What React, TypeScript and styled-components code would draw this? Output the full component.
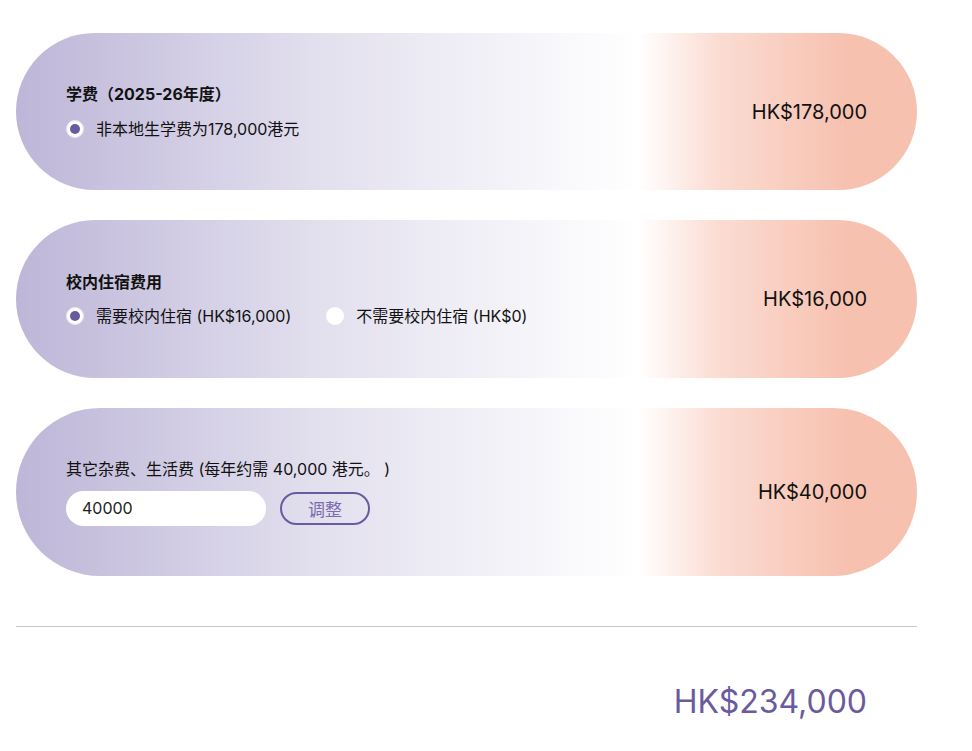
import React, { useState } from "react";
import styled, { createGlobalStyle } from "styled-components";

const Global = createGlobalStyle`
  html, body { margin: 0; padding: 0; background: #fff; }
  body { font-family: Inter, "Noto Sans CJK SC", sans-serif; color: #111; }
  * { box-sizing: border-box; }
`;

const Page = styled.div`
  width: 901px;
  margin: 33px 0 0 16px;
  display: flex;
  flex-direction: column;
  gap: 30px;
`;

const Card = styled.section<{ $h: number }>`
  height: ${(p) => p.$h}px;
  border-radius: 90px;
  padding: 0 50px;
  display: flex;
  align-items: center;
  justify-content: space-between;
  background: linear-gradient(
    to right,
    #bdb6d8 0%,
    #e4e1ef 35%,
    #ffffff 69%,
    #fbdcd2 78%,
    #f7c1b0 92%,
    #f7c1b0 100%
  );
`;

const Left = styled.div`
  display: flex;
  flex-direction: column;
`;

const Title = styled.div<{ $bold?: boolean }>`
  font-size: 16px;
  font-weight: ${(p) => (p.$bold ? 700 : 400)};
  line-height: 20px;
  color: #111;
`;

const Options = styled.div<{ $gap: number }>`
  display: flex;
  align-items: center;
  gap: 35px;
  margin-top: ${(p) => p.$gap}px;
`;

const Option = styled.label`
  display: flex;
  align-items: center;
  gap: 12px;
  font-size: 16px;
  line-height: 20px;
  color: #111;
  cursor: pointer;
`;

const Radio = styled.span<{ $on: boolean }>`
  width: 18px;
  height: 18px;
  border-radius: 50%;
  background: #fff;
  border: ${(p) => (p.$on ? "1px solid #e9e6f2" : "none")};
  display: flex;
  align-items: center;
  justify-content: center;
  &::after {
    content: "";
    width: 10px;
    height: 10px;
    border-radius: 50%;
    background: ${(p) => (p.$on ? "#6a5b9f" : "transparent")};
  }
`;

const Amount = styled.div`
  font-size: 20px;
  color: #111;
  line-height: 24px;
`;

const InputRow = styled.div`
  display: flex;
  align-items: center;
  gap: 14px;
  margin-top: 12px;
`;

const Input = styled.input`
  width: 200px;
  height: 35px;
  border: none;
  border-radius: 18px;
  background: #fff;
  padding: 0 16px;
  font-family: Inter, sans-serif;
  font-size: 16px;
  color: #222;
  outline: none;
`;

const Button = styled.button`
  width: 90px;
  height: 33px;
  border: 2px solid #6a5b9f;
  border-radius: 17px;
  background: transparent;
  color: #7a6cae;
  font-family: Inter, "Noto Sans CJK SC", sans-serif;
  font-size: 17px;
  cursor: pointer;
`;

const Divider = styled.hr`
  margin: 20px 0 0;
  border: none;
  border-top: 1px solid #c8c8c8;
`;

const Total = styled.div`
  text-align: right;
  padding-right: 50px;
  margin-top: 26px;
  font-size: 32px;
  color: #6a5b9f;
  line-height: 38px;
`;

export default function App() {
  const [hostel, setHostel] = useState(true);
  const [misc, setMisc] = useState("40000");
  return (
    <>
      <Global />
      <Page>
        <Card $h={157}>
          <Left>
            <Title $bold>学费（2025-26年度）</Title>
            <Options $gap={15}>
              <Option>
                <Radio $on />
                非本地生学费为178,000港元
              </Option>
            </Options>
          </Left>
          <Amount>HK$178,000</Amount>
        </Card>
        <Card $h={158}>
          <Left>
            <Title $bold>校内住宿费用</Title>
            <Options $gap={14}>
              <Option onClick={() => setHostel(true)}>
                <Radio $on={hostel} />
                需要校内住宿 (HK$16,000)
              </Option>
              <Option onClick={() => setHostel(false)}>
                <Radio $on={!hostel} />
                不需要校内住宿 (HK$0)
              </Option>
            </Options>
          </Left>
          <Amount>HK${hostel ? "16,000" : "0"}</Amount>
        </Card>
        <Card $h={168}>
          <Left>
            <Title>其它杂费、生活费 (每年约需 40,000 港元。 )</Title>
            <InputRow>
              <Input value={misc} onChange={(e) => setMisc(e.target.value)} />
              <Button>调整</Button>
            </InputRow>
          </Left>
          <Amount>HK$40,000</Amount>
        </Card>
        <Divider />
        <Total>HK$234,000</Total>
      </Page>
    </>
  );
}
